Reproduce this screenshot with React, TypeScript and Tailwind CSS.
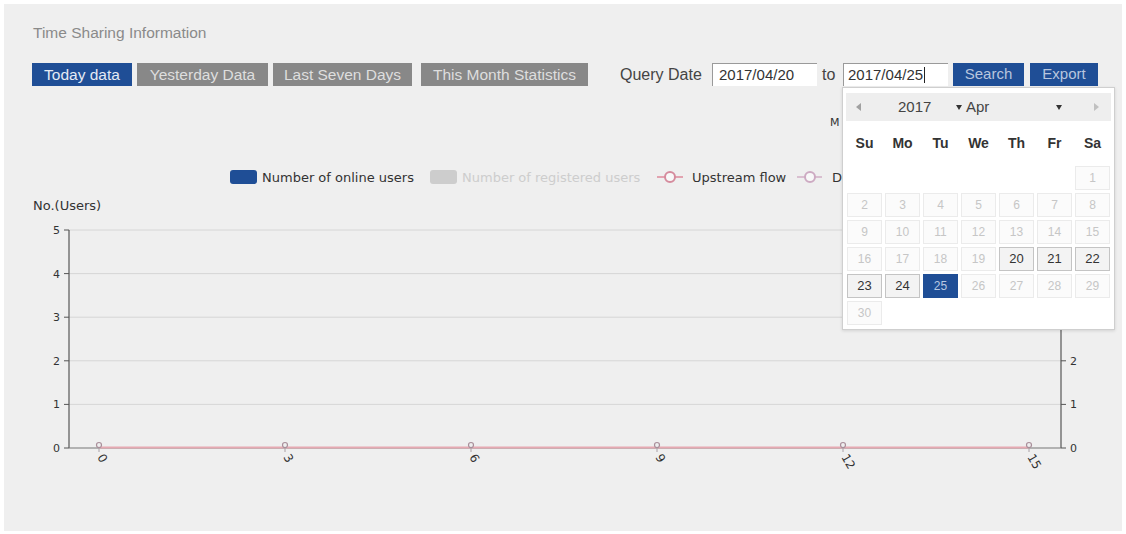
import React from 'react';

const blanks = 6;
const days = Array.from({ length: 30 }, (_, i) => i + 1);

function DayCell({ d }: { d: number }) {
    if (d === 25) {
        return (
            <div className="h-[24px] flex items-center justify-center bg-[#1f4e96] border border-[#1f4e96] text-[#b9c8e2] text-[12px]">
                {d}
            </div>
        );
    }
    if (d >= 20 && d <= 24) {
        return (
            <div className="h-[24px] flex items-center justify-center bg-[#f3f3f3] border border-[#c4c4c4] text-[#333] text-[13px]">
                {d}
            </div>
        );
    }
    return (
        <div className="h-[24px] flex items-center justify-center bg-[#fbfbfb] border border-[#ebebeb] text-[#c6c6c6] text-[12px]">
            {d}
        </div>
    );
}

function Calendar() {
    return (
        <div className="absolute left-[838px] top-[83px] w-[273px] h-[243px] bg-white border border-[#cfcfcf] shadow-[0_1px_3px_rgba(0,0,0,0.12)]">
            {/* month / year bar */}
            <div className="mt-[5px] mx-[3px] h-[28px] bg-[#eeeeee] flex items-center text-[15px] text-[#444]">
                <span className="ml-[10px] w-[8px] flex items-center">
                    <span className="block w-0 h-0 border-y-[4px] border-y-transparent border-r-[5px] border-r-[#a0a0a0]" />
                </span>
                <span className="ml-[34px] w-[58px]">2017</span>
                <span className="w-[10px] flex items-center">
                    <span className="block w-0 h-0 border-x-[3px] border-x-transparent border-t-[5px] border-t-[#333]" />
                </span>
                <span className="w-[90px]">Apr</span>
                <span className="w-[10px] flex items-center">
                    <span className="block w-0 h-0 border-x-[3px] border-x-transparent border-t-[5px] border-t-[#333]" />
                </span>
                <span className="ml-[28px] flex items-center">
                    <span className="block w-0 h-0 border-y-[4px] border-y-transparent border-l-[5px] border-l-[#c0c0c0]" />
                </span>
            </div>

            <div className="ml-[4px] mt-[10px] grid grid-cols-[repeat(7,35px)] gap-x-[3px] h-[24px] items-center text-[14px] font-bold text-[#333] text-center">
                {['Su', 'Mo', 'Tu', 'We', 'Th', 'Fr', 'Sa'].map((n) => (
                    <span key={n}>{n}</span>
                ))}
            </div>

            <div className="ml-[4px] mt-[11px] grid grid-cols-[repeat(7,35px)] gap-[3px]">
                {Array.from({ length: blanks }).map((_, i) => (
                    <div key={'b' + i} className="h-[24px]" />
                ))}
                {days.map((d) => (
                    <DayCell key={d} d={d} />
                ))}
            </div>
        </div>
    );
}

function Chart() {
    const gy = [130, 173.6, 217.2, 260.8, 304.4, 348];
    const xs = [95, 281, 467, 653, 839, 1025];
    const xl = ['0', '3', '6', '9', '12', '15'];
    return (
        <svg width="1118" height="431" className="block mt-[14px]" fontFamily="'DejaVu Sans', sans-serif">
            <text x="826" y="26" fontSize="11" fill="#333">M</text>

            {/* legend */}
            <rect x="226" y="70" width="27" height="14" rx="3" fill="#1f4e96" />
            <text x="258" y="82" fontSize="13" fill="#333">Number of online users</text>
            <rect x="426" y="70" width="27" height="14" rx="3" fill="#cdcdcd" />
            <text x="458" y="82" fontSize="13" fill="#cdcdcd">Number of registered users</text>
            <line x1="653" y1="77" x2="679" y2="77" stroke="#e2a3b0" strokeWidth="2" />
            <circle cx="666" cy="77" r="5" fill="#f8f8f8" stroke="#d58b9d" strokeWidth="2" />
            <text x="688" y="82" fontSize="13" fill="#333">Upstream flow</text>
            <line x1="793" y1="77" x2="818" y2="77" stroke="#d9bfd0" strokeWidth="2" />
            <circle cx="806" cy="77" r="5" fill="#f8f8f8" stroke="#cdaac2" strokeWidth="2" />
            <text x="828" y="82" fontSize="13" fill="#333">D</text>

            <text x="29" y="110" fontSize="13" fill="#333">No.(Users)</text>

            {/* grid */}
            {gy.map((y, i) => (
                <g key={i}>
                    {i < 5 && <line x1="65" y1={y} x2="1057" y2={y} stroke="#d6d6d6" />}
                    <line x1="60" y1={y} x2="65" y2={y} stroke="#555" />
                    <text x="56" y={y + 4} fontSize="11" fill="#333" textAnchor="end">{5 - i}</text>
                    <line x1="1057" y1={y} x2="1062" y2={y} stroke="#555" />
                    <text x="1066" y={y + 4} fontSize="11" fill="#333">{5 - i}</text>
                </g>
            ))}
            <line x1="65" y1="130" x2="65" y2="348" stroke="#555" strokeWidth="1.2" />
            <line x1="1057" y1="130" x2="1057" y2="348" stroke="#555" strokeWidth="1.2" />
            <line x1="65" y1="348" x2="1057" y2="348" stroke="#777" strokeWidth="1.2" />

            {/* series */}
            <line x1="95" y1="347.5" x2="1025" y2="347.5" stroke="#e6a9b2" strokeWidth="2" />
            {xs.map((x, i) => (
                <g key={x}>
                    <line x1={x} y1="344" x2={x} y2="352" stroke="#a9a0a6" />
                    <circle cx={x} cy="345" r="2.5" fill="#efefef" stroke="#a98f9a" strokeWidth="1.2" />
                    <text
                        x={x - 2}
                        y="357"
                        fontSize="12"
                        fill="#333"
                        transform={`rotate(60 ${x - 2} 357)`}
                    >
                        {xl[i]}
                    </text>
                </g>
            ))}
        </svg>
    );
}

export default function App() {
    const gray = 'h-[23px] flex items-center justify-center bg-[#888888] text-[#dedede] text-[15.5px]';
    return (
        <div className="w-[1126px] h-[534px] bg-white p-[4px] font-['Liberation_Sans',Arial,sans-serif]">
            <div className="relative h-[527px] bg-[#efefef]">
                <div className="pl-[29px] pt-[20px] h-[38px] text-[15.5px] leading-[18px] text-[#8a8a8a]">
                    Time Sharing Information
                </div>

                <div className="flex items-center mt-[21px] pl-[28px] h-[23px]">
                    <button className="w-[100px] h-[23px] flex items-center justify-center bg-[#1f4e96] text-[#e4eaf4] text-[15.5px]">
                        Today data
                    </button>
                    <button className={`ml-[5px] w-[131px] ${gray}`}>Yesterday Data</button>
                    <button className={`ml-[5px] w-[139px] ${gray}`}>Last Seven Days</button>
                    <button className={`ml-[9px] w-[167px] ${gray}`}>This Month Statistics</button>

                    <span className="ml-[32px] w-[92px] text-[16px] text-[#444]">Query Date</span>
                    <div className="w-[105px] h-[23px] bg-white border-t border-l border-[#9a9a9a] border-r-[#e0e0e0] border-b-[#e0e0e0] pl-[6px] flex items-center text-[15px] text-[#333]">
                        2017/04/20
                    </div>
                    <span className="ml-[5px] w-[21px] text-[16px] text-[#444]">to</span>
                    <div className="w-[105px] h-[23px] bg-white border-t border-l border-[#9a9a9a] border-r-[#e0e0e0] border-b-[#e0e0e0] pl-[4px] flex items-center text-[15px] text-[#333]">
                        2017/04/25<span className="ml-[1px] w-px h-[16px] bg-[#222]" />
                    </div>
                    <button className="ml-[5px] w-[71px] h-[23px] flex items-center justify-center bg-[#1f4e96] text-[#b8c6de] text-[15px]">
                        Search
                    </button>
                    <button className="ml-[6px] w-[68px] h-[23px] flex items-center justify-center bg-[#1f4e96] text-[#b8c6de] text-[15px]">
                        Export
                    </button>
                </div>

                <Chart />
                <Calendar />
            </div>
        </div>
    );
}
